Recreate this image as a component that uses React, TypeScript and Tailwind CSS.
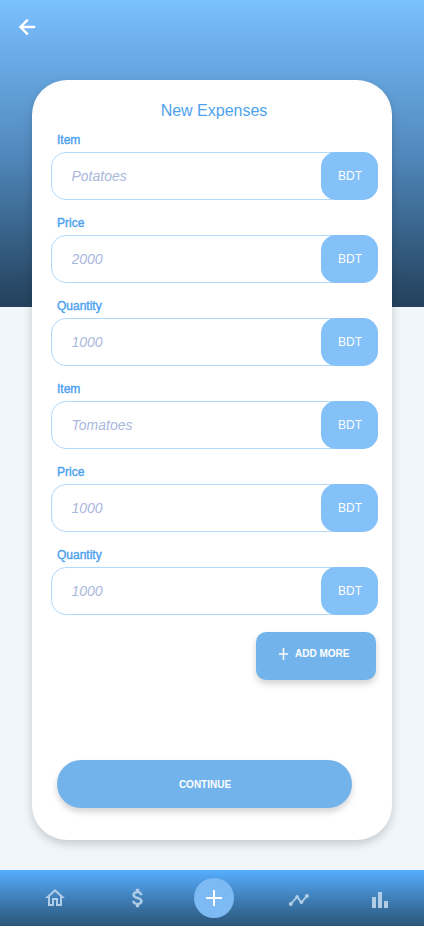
import React from "react";

const fields = [
  { label: "Item", placeholder: "Potatoes" },
  { label: "Price", placeholder: "2000" },
  { label: "Quantity", placeholder: "1000" },
  { label: "Item", placeholder: "Tomatoes" },
  { label: "Price", placeholder: "1000" },
  { label: "Quantity", placeholder: "1000" },
];

function Icon({ d, className }: { d: string; className: string }) {
  return (
    <svg viewBox="0 0 24 24" fill="currentColor" className={className}>
      <path d={d} />
    </svg>
  );
}

function Field({ label, placeholder }: { label: string; placeholder: string }) {
  return (
    <div className="flex h-[83px] flex-col">
      <label className="ml-1.5 h-5 text-xs leading-4 text-[#4da2ee] [-webkit-text-stroke:0.4px_#4da2ee]">{label}</label>
      <div className="flex h-12 w-[327px] rounded-[15px] border border-[#b2d9fb]">
        <input
          className="min-w-0 flex-1 bg-transparent pl-[19.5px] text-sm italic outline-none placeholder:text-[#a9b8dc]"
          placeholder={placeholder}
        />
        <div className="-m-px flex h-12 w-[57px] items-center justify-center rounded-[15px] bg-[#84c1f9] pl-px text-xs text-white">
          BDT
        </div>
      </div>
    </div>
  );
}

export default function App() {
  return (
    <div className="flex h-[926px] w-[424px] flex-col overflow-hidden bg-[#f1f6fb] font-['Liberation_Sans',Arial,sans-serif]">
      <header className="h-[307px] shrink-0 bg-linear-to-b from-[#7ac0ff] via-[#5189bd] via-50% to-[#23415c] pt-[14.5px] pl-[15px]">
        <button className="block text-white" aria-label="Back">
          <Icon
            className="size-6 stroke-current stroke-[0.5]"
            d="M20 11H7.83l5.59-5.59L12 4l-8 8 8 8 1.41-1.41L7.83 13H20v-2z"
          />
        </button>
      </header>

      <main className="mx-8 -mt-[227px] flex h-[760px] w-[360px] shrink-0 flex-col rounded-[35px] bg-white px-[19px] shadow-[0_4px_10px_rgba(0,0,0,0.18)]">
        <h1 className="ml-1 mt-[19px] h-[33px] w-[318px] text-center text-base leading-6 text-[#4da2ee]">New Expenses</h1>
        {fields.map((field, i) => (
          <Field key={i} {...field} />
        ))}
        <button className="ml-[205px] mt-[2px] flex h-12 w-[120px] shrink-0 items-start rounded-[10px] bg-[#72b3eb] pl-[22px] pt-[15px] text-white shadow-[0_4px_6px_rgba(0,0,0,0.17)]">
          <svg viewBox="0 0 11 14" className="h-[14px] w-[11px]" fill="none" stroke="currentColor" strokeWidth="1.5">
            <path d="M5.5 1v12M1 7h9" />
          </svg>
          <span className="ml-[6px] text-[10px] font-bold leading-[14px]">ADD MORE</span>
        </button>
        <button className="ml-1.5 mt-20 flex h-12 w-[295px] shrink-0 items-center justify-center rounded-full bg-[#72b3eb] pl-px text-[10px] font-bold text-white shadow-[0_4px_6px_rgba(0,0,0,0.17)]">
          CONTINUE
        </button>
      </main>

      <nav className="mt-[30px] flex h-14 shrink-0 items-center bg-linear-to-b from-[#56aeff] to-[#2b5579] pl-[15px] text-[#b1cde7]">
        <div className="flex w-20 justify-center">
          <Icon className="size-6" d="M12 5.69l5 4.5V18h-2v-6H9v6H7v-7.81l5-4.5M12 3L2 12h3v8h6v-6h2v6h6v-8h3L12 3z" />
        </div>
        <div className="flex w-[84px] justify-center pl-px">
          <Icon
            className="size-6 stroke-current stroke-[0.4]"
            d="M11.8 10.9c-2.27-.59-3-1.2-3-2.15 0-1.09 1.01-1.85 2.7-1.85 1.78 0 2.44.85 2.5 2.1h2.21c-.07-1.72-1.12-3.3-3.21-3.81V3h-3v2.16c-1.94.42-3.5 1.68-3.5 3.61 0 2.31 1.91 3.46 4.7 4.13 2.5.6 3 1.48 3 2.41 0 .69-.49 1.79-2.7 1.79-2.06 0-2.87-.92-2.98-2.1h-2.2c.12 2.19 1.76 3.42 3.68 3.83V21h3v-2.15c1.95-.37 3.5-1.5 3.5-3.55 0-2.84-2.43-3.81-4.7-4.4z"
          />
        </div>
        <div className="ml-[15px] flex size-10 items-center justify-center rounded-full bg-[#7dbaf3] text-white">
          <svg viewBox="0 0 16 16" className="size-4" fill="none" stroke="currentColor" strokeWidth="2">
            <path d="M8 0v16M0 8h16" />
          </svg>
        </div>
        <div className="ml-[53px] flex pt-1">
          <svg viewBox="0 0 24 24" className="size-6" fill="currentColor">
            <path d="M3.8 16 10.1 8.7 14.4 14.5 20.1 7.7" fill="none" stroke="currentColor" strokeWidth="1.8" />
            <circle cx="3.8" cy="16" r="2" />
            <circle cx="10.1" cy="8.9" r="1.8" />
            <circle cx="14.4" cy="14.3" r="1.8" />
            <circle cx="19.9" cy="7.9" r="2" />
          </svg>
        </div>
        <div className="ml-[57px] flex pt-1">
          <Icon className="size-6" d="M4 9h4v11H4zM16 13h4v7h-4zM10 4h4v16h-4z" />
        </div>
      </nav>
    </div>
  );
}
